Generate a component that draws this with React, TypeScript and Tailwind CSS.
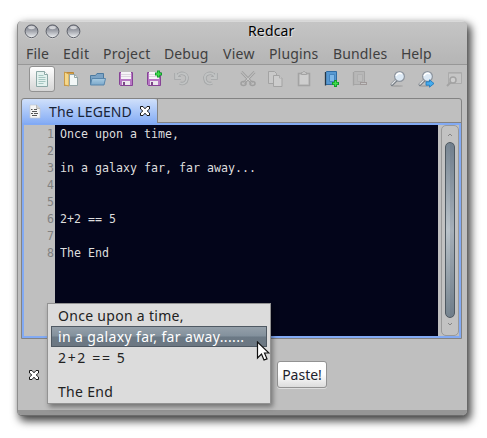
import type { ReactNode } from 'react';

const uiFont = "font-['Noto_Sans','Open_Sans',sans-serif]";

function TrafficLight() {
  return (
    <svg width="15" height="15" viewBox="0 0 15 15">
      <circle cx="7.5" cy="8.2" r="6.6" fill="#dedede" />
      <circle cx="7.5" cy="7.3" r="6.4" fill="url(#orb)" stroke="#5d6069" strokeWidth="1" />
      <ellipse cx="7.5" cy="3.5" rx="3.4" ry="1.7" fill="#fff" opacity=".6" />
    </svg>
  );
}

function Tool({ children, dim = false }: { children: ReactNode; dim?: boolean }) {
  return (
    <svg className={dim ? 'shrink-0 opacity-50' : 'shrink-0'} width="28" height="20" viewBox="0 0 28 20">
      {children}
    </svg>
  );
}

function DocIcon() {
  return (
    <svg width="20" height="20" viewBox="0 0 20 20">
      <path d="M4.500 2.500h8l3 3v12h-11z" fill="#e3f1ee" stroke="#8ba7a5" />
      <path d="M12.500 2.500v3h3" fill="#fff" stroke="#8ba7a5" />
      <path d="M6.500 6.500h5M6.500 8.500h7M6.500 10.500h7M6.500 12.500h7M6.500 14.500h5" stroke="#a5c6c1" />
    </svg>
  );
}

function Floppy() {
  return (
    <>
      <path d="M7.500 3.500h13v13h-12l-1-1z" fill="#b777c4" stroke="#864396" />
      <path d="M9 3h10v7H9z" fill="#f6f3f7" />
      <path d="M9 5.500h10M9 7.500h10" stroke="#dcd5df" />
      <path d="M10 12h8v4h-8z" fill="#ece8ee" />
      <path d="M11 13h2v3h-2z" fill="#7b4787" />
    </>
  );
}

function Book({ blue }: { blue: boolean }) {
  return (
    <>
      <path d="M7.500 3.500l1-1h10v13h-11z" fill={blue ? '#5798d1' : '#b0b0b0'} stroke={blue ? '#2f6ba3' : '#8d8d8d'} />
      <path d="M7.500 3v13.500" stroke={blue ? '#263746' : '#898989'} strokeWidth="1.300" />
      <path d="M11.500 5.500h5v7h-5z" fill={blue ? '#7db7e8' : '#bababa'} stroke={blue ? '#4584bd' : '#a0a0a0'} />
    </>
  );
}

function Magnifier() {
  return (
    <>
      <ellipse cx="13" cy="17" rx="6" ry="1" fill="#999" opacity=".6" />
      <path d="M12 11.500l-4 4" stroke="#747c84" strokeWidth="3" strokeLinecap="round" />
      <path d="M12 11l-4.500 4.500" stroke="#e2e4e6" strokeWidth="1.200" />
      <circle cx="15.500" cy="7.500" r="4.900" fill="#dce9f5" stroke="#8d949d" strokeWidth="1.200" />
      <path d="M12 7a4 4 0 0 1 6-2" fill="none" stroke="#fff" strokeWidth="1.500" />
    </>
  );
}

function CloseX() {
  return (
    <svg width="12" height="12" viewBox="0 0 12 12">
      <path d="M1.500 1.500h2.500L6 3.800 8 1.500h2.500V4L8.200 6l2.300 2v2.500H8L6 8.200l-2 2.300H1.500V8l2.300-2-2.300-2z" fill="#fff" stroke="#161616" strokeWidth="1" strokeLinejoin="round" />
    </svg>
  );
}

const menu = [
  ['File', 'w-[37px] tracking-[0.2px]'],
  ['Edit', 'w-[40px] tracking-[0.3px]'],
  ['Project', 'w-[61px] tracking-[0.25px]'],
  ['Debug', 'w-[59px] tracking-[0.1px]'],
  ['View', 'w-[46px] tracking-[0.3px]'],
  ['Plugins', 'w-[64px] tracking-[0.15px]'],
  ['Bundles', 'w-[68px] tracking-[0.15px]'],
  ['Help', 'w-[40px] tracking-[0px]'],
];

const lines = ['Once upon a time,', '', 'in a galaxy far, far away...', '', '', '2+2 == 5', '', 'The End'];

export default function App() {
  return (
    <div className={`relative h-[438px] w-[487px] overflow-hidden bg-white pl-[17px] pt-[21px] text-[14px] ${uiFont}`}>
      <svg className="absolute" width="0" height="0">
        <defs>
          <linearGradient id="orb" x2="0" y2="1">
            <stop stopColor="#777b87" />
            <stop offset=".45" stopColor="#9fa2aa" />
            <stop offset="1" stopColor="#eef0f2" />
          </linearGradient>
          <linearGradient id="folder" x2="0" y2="1">
            <stop stopColor="#a9cbe2" />
            <stop offset="1" stopColor="#7aa8cb" />
          </linearGradient>
        </defs>
      </svg>

      <div className="flex h-[395px] w-[450px] flex-col overflow-hidden rounded-[5px] border-b border-l border-b-[#6b6b6b] border-l-[#8d8d8d] bg-[#bfbfbf] shadow-[3px_4px_8px_1px_rgba(0,0,0,0.75)]">
        <header className="h-[44px] shrink-0 border-b border-[#979797] border-t border-t-[#d9d9d9] bg-linear-to-b from-[#c5c5c5] to-[#b5b5b5]">
          <div className="flex h-[17px] items-center">
            <div className="flex gap-[6px] pl-[6px] pt-[1px]">
              <TrafficLight />
              <TrafficLight />
              <TrafficLight />
            </div>
            <span className="ml-[167px] whitespace-nowrap text-black tracking-[0.15px] [text-shadow:1px_1px_0_#e3e3e3]">Redcar</span>
          </div>
          <nav className="flex h-[28px] items-center pl-[8px] text-[#404040]">
            {menu.map(([label, width]) => (
              <span key={label} className={`${width} shrink-0 whitespace-nowrap`}>{label}</span>
            ))}
          </nav>
        </header>

        <div className="flex h-[33px] shrink-0 items-start pl-[11px] pt-[1px]">
          <div className="flex h-[26px] w-[26px] shrink-0 items-center justify-center rounded-[3px] border border-[#929292] bg-linear-to-b from-white to-[#d5d5d5]">
            <DocIcon />
          </div>
          <div className="ml-[1px] flex pt-[3px]">
            <Tool>
              <path d="M8.500 3.500h9v13h-9z" fill="#d7a044" stroke="#b98638" />
              <path d="M8.500 3l4.500 2v12l-4.500-1z" fill="#f5d78a" stroke="#c99b49" />
              <path d="M13.500 5.500h5l3 2.500v8.500h-8z" fill="#f2f7f6" stroke="#94a5a5" />
              <path d="M18.500 5.500v3h3" fill="none" stroke="#94a5a5" />
            </Tool>
            <Tool>
              <path d="M6.500 15V6.500h5l1.500-2h6.500v11z" fill="#7ba3c5" stroke="#4d7a9f" />
              <path d="M8 9.500h13.500l-1.500 6.500H6.500z" fill="url(#folder)" stroke="#5886ac" />
            </Tool>
            <Tool><Floppy /></Tool>
            <Tool>
              <Floppy />
              <path d="M18.500 1.500v7M15 5h7" stroke="#0d9a2c" strokeWidth="3" />
              <path d="M18.500 2.500v5M16 5h5" stroke="#43dc4b" strokeWidth="1.400" />
            </Tool>
            <Tool dim>
              <path d="M8 4v5h5M9 8c2-6 11-4 10 2-.5 4-4 5.500-7 4" fill="none" stroke="#8b8f91" strokeWidth="3.500" />
              <path d="M8 4v5h5M9 8c2-6 11-4 10 2-.5 4-4 5.500-7 4" fill="none" stroke="#c3c7c8" strokeWidth="1.800" />
            </Tool>
            <Tool dim>
              <path d="M20 4v5h-5M19 8C17 2 8 4 9 10c.5 4 4 5.500 7 4" fill="none" stroke="#8b8f91" strokeWidth="3.500" />
              <path d="M20 4v5h-5M19 8C17 2 8 4 9 10c.5 4 4 5.500 7 4" fill="none" stroke="#c3c7c8" strokeWidth="1.800" />
            </Tool>
          </div>
          <div className="ml-[10px] flex pt-[3px]">
            <Tool dim>
              <path d="M7.500 3l10.500 11M20.500 3L10 14" stroke="#808080" strokeWidth="2.600" />
              <path d="M7.500 3l10.500 11M20.500 3L10 14" stroke="#ddd" />
              <ellipse cx="9.500" cy="14.500" rx="2.500" ry="2" fill="none" stroke="#808080" strokeWidth="1.500" />
              <ellipse cx="18.500" cy="14.500" rx="2.500" ry="2" fill="none" stroke="#808080" strokeWidth="1.500" />
            </Tool>
            <Tool dim>
              <path d="M6.500 2.500h6l2 2v10h-8z" fill="#d3d3d3" stroke="#898989" />
              <path d="M11.500 6.500h6l2.500 2.500v8.500h-8.500z" fill="#d9d9d9" stroke="#898989" />
              <path d="M17.500 6.500V9H20" fill="#eee" stroke="#999" />
            </Tool>
            <Tool dim>
              <path d="M8.500 4.500h11v12h-11z" fill="#ccc" stroke="#888" strokeWidth="1.500" />
              <path d="M10 6h8v9h-8z" fill="#ddd" />
              <path d="M11.500 5.500v-2h1l1-1h1l1 1h1v2z" fill="#ccc" stroke="#888" />
            </Tool>
            <Tool>
              <Book blue />
              <path d="M17.500 11v7M14 14.500h7" stroke="#0d9a2c" strokeWidth="3" />
              <path d="M17.500 12v5M15 14.500h5" stroke="#43dc4b" strokeWidth="1.300" />
            </Tool>
            <Tool dim>
              <Book blue={false} />
              <path d="M14 14.500h7" stroke="#807575" strokeWidth="3" />
              <path d="M15 14.500h5" stroke="#ccc" />
            </Tool>
          </div>
          <div className="ml-[10px] flex pt-[3px]">
            <Tool><Magnifier /></Tool>
            <Tool>
              <Magnifier />
              <path d="M14 12.800h3.500v-2l4.500 3.700-4.500 3.700v-2H14z" fill="#45acee" stroke="#1b74b9" strokeWidth=".8" />
            </Tool>
            <Tool dim>
              <path d="M8.500 3.500h13v11h-13z" fill="#ccc" stroke="#999" />
              <path d="M9 4.500h12" stroke="#aaa" />
              <path d="M11 13l-4 4" stroke="#888" strokeWidth="2" />
              <circle cx="13" cy="11" r="3" fill="#ddd" stroke="#888" strokeWidth="1.500" />
            </Tool>
          </div>
        </div>

        <section className="ml-[3px] flex h-[241px] w-[441px] shrink-0 flex-col rounded-t-[3px] border border-[#838383]">
          <div className="flex h-[24px] shrink-0">
            <div className="flex w-[135px] items-center rounded-t-[3px] bg-linear-to-b from-[#d0e0fa] to-[#86adf5] pl-[7px] text-[#182337]">
              <svg width="12" height="15" viewBox="0 0 12 15">
                <path d="M1 1h7l3 3v10H1z" fill="#f5f5f5" stroke="#c4c8ce" strokeWidth=".7" />
                <path d="M7.500 1v3.500H11" fill="#ccc" stroke="#aaa" strokeWidth=".7" />
                <path d="M2 5.500h1.500M5 5.500h3M3 7.500h5M2 9.500h2M5 9.500h4M3 11.500h5" stroke="#444" strokeWidth=".9" />
              </svg>
              <span className="ml-[8px] w-[87px] shrink-0 whitespace-nowrap tracking-[0.1px]">The LEGEND</span>
              <span className="ml-[3px]"><CloseX /></span>
            </div>
            <div className="flex-1 border-b border-l border-[#838383]" />
          </div>
          <div className="flex h-[215px] border-[2px] border-[#82aaf4]">
            <div className="w-[31px] shrink-0 bg-[#bfbfbf] pr-[1px] text-right font-['DejaVu_Sans_Mono',monospace] text-[13px] leading-[17px] text-[#828282]">
              {lines.map((_, i) => <div key={i} className="origin-right scale-x-[0.895]">{i + 1}</div>)}
            </div>
            <div className="w-[383px] shrink-0 bg-[#03051a] pl-[5px]">
              <pre className="origin-left scale-x-[0.8945] font-['DejaVu_Sans_Mono',monospace] text-[13px] leading-[17px] text-[#dedede]">
                {lines.join('\n')}
              </pre>
            </div>
            <div className="ml-[3px] flex w-[18px] shrink-0 flex-col items-center rounded-[5px] border border-[#989898] bg-[#c2c2c2]">
              <svg width="6" height="16" viewBox="0 0 6 16"><path d="M1 10l2-2 2 2" fill="none" stroke="#858585" /></svg>
              <div className="w-[10px] flex-1 rounded-[5px] border border-[#4f5961] bg-linear-to-b from-[#778592] via-[#bac3ca] to-[#76848f]">
                <div className="ml-[4px] h-full bg-[#536677]/20" />
              </div>
              <svg width="6" height="17" viewBox="0 0 6 17"><path d="M1 5l2 2 2-2" fill="none" stroke="#858585" /></svg>
            </div>
          </div>
        </section>

        <div className="flex h-[71px] shrink-0 items-center pl-[10px]">
          <CloseX />
          <button className="ml-[237px] h-[27px] w-[50px] whitespace-nowrap rounded-[3px] border border-[#929292] bg-linear-to-b from-white via-[#fdfdfd] to-[#dcdcdc] text-[#1d222c] shadow-[0_1px_0_#ddd]">Paste!</button>
        </div>
        <div className="flex-1 bg-[#969696]" />
      </div>

      <div className="absolute left-[47px] top-[303px] h-[101px] w-[224px] border border-[#929292] bg-[#dcdcdc] p-[2px] text-[#222] shadow-[2px_3px_5px_rgba(0,0,0,0.4)]">
        <div className="h-[20px] whitespace-pre pl-[8px] leading-[20px] tracking-[0.3px]">Once upon a time,</div>
        <div className="ml-[1px] h-[21px] w-[216px] whitespace-pre border border-[#4f5963] bg-[linear-gradient(#95a0aa,#82909c_49%,#6b7985_51%,#6c7782)] pl-[6px] leading-[20px] tracking-[0.37px] text-white">in a galaxy far, far away......</div>
        <div className="h-[21px] whitespace-pre pl-[8px] leading-[22px] tracking-[1.65px]">2+2 == 5</div>
        <div className="mt-[13px] h-[20px] whitespace-pre pl-[8px] leading-[22px] tracking-[0.3px]">The End</div>
      </div>

      <svg className="absolute left-[256px] top-[341px]" width="14" height="21" viewBox="0 0 14 21">
        <path d="M1.500 1v16l4-4 2.500 6 3-1.200-2.500-5.800h4.500z" fill="#fff" stroke="#111" strokeWidth="1.200" />
      </svg>
    </div>
  );
}
